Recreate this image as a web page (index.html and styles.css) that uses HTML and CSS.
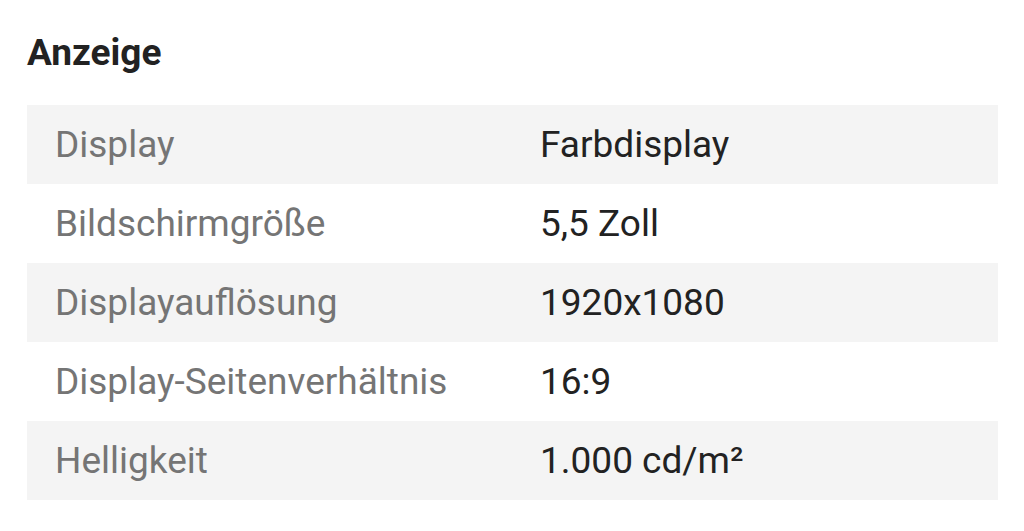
FILE: index.html
```html
<!DOCTYPE html>
<html lang="de">
<head>
<meta charset="utf-8">
<link rel="stylesheet" href="styles.css">
</head>
<body>
<section class="specs">
  <h2 class="specs-title">Anzeige</h2>
  <div class="specs-table">
    <div class="row"><div class="label">Display</div><div class="value">Farbdisplay</div></div>
    <div class="row"><div class="label">Bildschirmgröße</div><div class="value">5,5 Zoll</div></div>
    <div class="row"><div class="label">Displayauflösung</div><div class="value">1920x1080</div></div>
    <div class="row"><div class="label">Display-Seitenverhältnis</div><div class="value">16:9</div></div>
    <div class="row"><div class="label">Helligkeit</div><div class="value">1.000 cd/m²</div></div>
  </div>
</section>
</body>
</html>
```
FILE: styles.css
```css
html, body {
  margin: 0;
  padding: 0;
  background: #ffffff;
}
body {
  font-family: Roboto, "Liberation Sans", sans-serif;
}
.specs {
  padding: 27px 26px 0 27px;
}
.specs-title {
  margin: 0;
  font-size: 37px;
  font-weight: 700;
  color: #222222;
  line-height: 52px;
  height: 78px;
}
.specs-table {
  display: flex;
  flex-direction: column;
}
.row {
  display: grid;
  grid-template-columns: 513px 1fr;
  height: 79px;
  align-items: center;
  font-size: 37px;
}
.row:nth-child(odd) {
  background: #f4f4f4;
}
.label {
  padding-left: 28px;
  color: #757575;
}
.value {
  color: #222222;
}
```
